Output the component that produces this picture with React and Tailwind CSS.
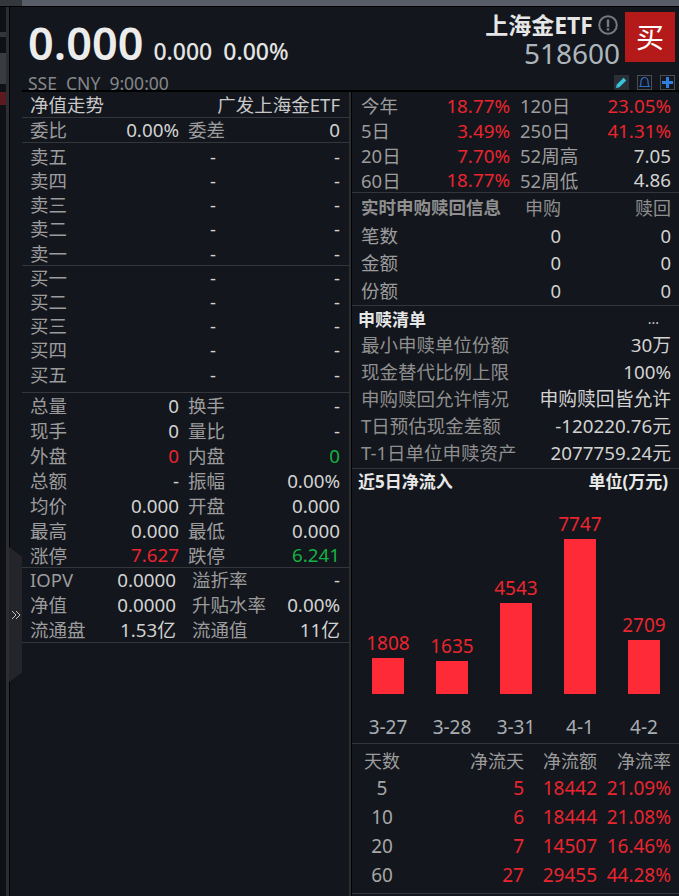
const font = { fontFamily: '"Noto Sans", "Noto Sans CJK SC", sans-serif' };

const RED = "text-[#e9252f]";
const GREEN = "text-[#14b143]";

// 一行两组: 左 label + value, 右 label + value
const Pair = ({ label, value, cls = "text-[#d2d2d2]", w = "w-[149px]" }) => (
    <div className={`flex justify-between items-center h-full ${w}`}>
        <span className="text-[#9c9c9c] whitespace-nowrap">{label}</span>
        <span className={`whitespace-nowrap text-[18.8px] ${cls}`}>{value}</span>
    </div>
);

const Row = ({ a, b, h = "h-[24.4px]", gap = "gap-[9px]", w = "w-[149px]" }) => (
    <div className={`flex ${gap} pl-2 pr-[9px] ${h}`}>
        <Pair {...a} w={w} />
        <div className="flex-1 h-full">
            <Pair {...b} w="w-full" />
        </div>
    </div>
);

const OrderRows = ({ names }) =>
    names.map((n) => (
        <div key={n} className="grid grid-cols-[186px_1fr] items-center pl-2 pr-[9px] h-[24.2px]">
            <span className="text-[#9c9c9c] flex justify-between">
                {n}
                <span className="text-[#d2d2d2]">-</span>
            </span>
            <span className="text-right text-[#d2d2d2]">-</span>
        </div>
    ));

const stats = [
    [{ label: "总量", value: "0" }, { label: "换手", value: "-" }],
    [{ label: "现手", value: "0" }, { label: "量比", value: "-" }],
    [{ label: "外盘", value: "0", cls: RED }, { label: "内盘", value: "0", cls: GREEN }],
    [{ label: "总额", value: "-" }, { label: "振幅", value: "0.00%" }],
    [{ label: "均价", value: "0.000" }, { label: "开盘", value: "0.000" }],
    [{ label: "最高", value: "0.000" }, { label: "最低", value: "0.000" }],
    [{ label: "涨停", value: "7.627", cls: RED }, { label: "跌停", value: "6.241", cls: GREEN }],
];

const etfStats = [
    [{ label: "IOPV", value: "0.0000" }, { label: "溢折率", value: "-" }],
    [{ label: "净值", value: "0.0000" }, { label: "升贴水率", value: "0.00%" }],
    [{ label: "流通盘", value: "1.53亿" }, { label: "流通值", value: "11亿" }],
];

const returns = [
    [{ label: "今年", value: "18.77%", cls: RED }, { label: "120日", value: "23.05%", cls: RED }],
    [{ label: "5日", value: "3.49%", cls: RED }, { label: "250日", value: "41.31%", cls: RED }],
    [{ label: "20日", value: "7.70%", cls: RED }, { label: "52周高", value: "7.05" }],
    [{ label: "60日", value: "18.77%", cls: RED }, { label: "52周低", value: "4.86" }],
];

const lists = [
    ["最小申赎单位份额", "30万"],
    ["现金替代比例上限", "100%"],
    ["申购赎回允许情况", "申购赎回皆允许"],
    ["T日预估现金差额", "-120220.76元"],
    ["T-1日单位申赎资产", "2077759.24元"],
];

const bars = [
    ["3-27", 1808],
    ["3-28", 1635],
    ["3-31", 4543],
    ["4-1", 7747],
    ["4-2", 2709],
];

const flows = [
    ["5", "5", "18442", "21.09%"],
    ["10", "6", "18444", "21.08%"],
    ["20", "7", "14507", "16.46%"],
    ["60", "27", "29455", "44.28%"],
];

const Header = () => (
    <div className="flex justify-between h-[83px] border-b-2 border-black box-content">
        <div className="pl-[6px]">
            <div className="flex items-baseline h-[63px] pt-[5px]">
                <span className="text-[45px] leading-[62px] font-semibold text-[#ececec]">0.000</span>
                <span className="ml-[10px] text-[23px] font-medium text-[#e4e4e4]">0.000</span>
                <span className="ml-[11px] text-[23px] font-medium text-[#e4e4e4]">0.00%</span>
            </div>
            <div className="text-[17.5px] leading-[16px] mt-[5px] text-[#85878a] whitespace-pre">SSE  CNY  9:00:00</div>
        </div>
        <div className="flex flex-col items-end pr-1">
            <div className="flex gap-[5px] pt-[5px]">
                <div className="flex flex-col items-end">
                    <div className="flex items-center gap-[5px] h-[26px] pr-[2px]">
                        <span className="text-[23px] font-bold text-[#e6e6e6] leading-none">上海金ETF</span>
                        <svg width="20" height="20" viewBox="0 0 20 20" fill="none">
                            <circle cx="10" cy="10" r="8.8" stroke="#77797c" strokeWidth="2" />
                            <rect x="8.8" y="4.5" width="2.4" height="7.5" fill="#77797c" />
                            <rect x="8.8" y="13.2" width="2.4" height="2.4" fill="#77797c" />
                        </svg>
                    </div>
                    <div className="text-[28px] leading-[31px] text-[#aeb6bd]">518600</div>
                </div>
                <div className="w-[50px] h-[50px] bg-[#b51a1a] flex items-center justify-center text-[28px] text-white leading-none">买</div>
            </div>
            <div className="flex gap-2 mt-[6px]">
                <div className="w-[15px] h-[15px] bg-[#2a3036] flex items-center justify-center">
                    <svg width="13" height="13" viewBox="0 0 13 13">
                        <path d="M1 12 L1.8 8.6 L8.6 1.8 L11.2 4.4 L4.4 11.2 Z" fill="#37c5dc" />
                    </svg>
                </div>
                <div className="w-[15px] h-[15px] border border-[#4a4d52] flex items-center justify-center">
                    <svg width="13" height="13" viewBox="0 0 13 13" fill="none">
                        <path d="M2 10.5 C3 9.5 3 7 3 5.5 C3 3.5 4.5 1.5 6.5 1.5 C8.5 1.5 10 3.5 10 5.5 C10 7 10 9.5 11 10.5 Z" stroke="#2f6fc9" strokeWidth="1.2" />
                    </svg>
                </div>
                <div className="w-[15px] h-[15px] border border-[#4a4d52] flex items-center justify-center">
                    <svg width="13" height="13" viewBox="0 0 13 13">
                        <path d="M5 1 H8 V5 H12 V8 H8 V12 H5 V8 H1 V5 H5 Z" fill="#2f7fe0" />
                    </svg>
                </div>
            </div>
        </div>
    </div>
);

const LeftPanel = () => (
    <div className="w-[327px]">
        <div className="flex justify-between items-center h-[26px] pt-[2px] pl-2 pr-[9px] border-b border-[#33363b] text-[#c8c8c8]">
            <span>净值走势</span>
            <span>广发上海金ETF</span>
        </div>
        <div className="h-[25px] border-b border-[#33363b]">
            <Row a={{ label: "委比", value: "0.00%" }} b={{ label: "委差", value: "0" }} />
        </div>
        <div className="h-[123px] pt-[2px] border-b border-[#33363b]">
            <OrderRows names={["卖五", "卖四", "卖三", "卖二", "卖一"]} />
        </div>
        <div className="h-[127px] border-b border-[#33363b]">
            <OrderRows names={["买一", "买二", "买三", "买四", "买五"]} />
        </div>
        <div className="h-[175px] pt-[1px] border-b border-[#33363b]">
            {stats.map(([a, b]) => (
                <Row key={a.label} a={a} b={b} h="h-[24.9px]" />
            ))}
        </div>
        <div className="h-[75px] border-b border-[#33363b]">
            {etfStats.map(([a, b]) => (
                <Row key={a.label} a={a} b={b} h="h-[24.8px]" gap="gap-[16px]" w="w-[146px]" />
            ))}
        </div>
    </div>
);

const RightPanel = () => (
    <div className="flex-1 min-w-0">
        <div className="h-[101px] pt-[2px] border-b border-[#33363b]">
            {returns.map(([a, b]) => (
                <div key={a.label} className="flex gap-[10px] pl-[9px] pr-2 h-[24.8px]">
                    <Pair {...a} />
                    <div className="flex-1 h-full">
                        <Pair {...b} w="w-full" />
                    </div>
                </div>
            ))}
        </div>
        <div className="h-[113px] pt-[1px] pl-[9px] pr-2 border-b border-[#33363b]">
            <div className="grid grid-cols-[1fr_54px_110px] items-center h-[28px] text-right text-[#8f8f8f] text-lg">
                <span className="text-left font-bold text-[17.5px]">实时申购赎回信息</span>
                <span>申购</span>
                <span>赎回</span>
            </div>
            {["笔数", "金额", "份额"].map((n) => (
                <div key={n} className="grid grid-cols-[1fr_54px_110px] items-center h-[27.7px] text-right text-[#d2d2d2]">
                    <span className="text-left text-[#9c9c9c]">{n}</span>
                    <span>0</span>
                    <span>0</span>
                </div>
            ))}
        </div>
        <div className="h-[163px] pl-[9px] pr-2 border-b border-[#33363b]">
            <div className="flex justify-between items-center h-[26px] -ml-[3px] font-bold text-[17px] text-[#e8e8e8]">
                <span>申赎清单</span>
                <span className="mr-[12px] text-[#c8c8c8] font-normal text-sm">...</span>
            </div>
            {lists.map(([k, v]) => (
                <div key={k} className="flex justify-between items-center h-[27px]">
                    <span className="text-[#8f8f8f]">{k}</span>
                    <span className="text-[#d2d2d2] text-[18.8px]">{v}</span>
                </div>
            ))}
        </div>
        <div className="flex justify-between items-center h-[25px] pl-[6px] pr-[11px] font-bold text-[17px] text-[#e8e8e8]">
            <span>近5日净流入</span>
            <span>单位(万元)</span>
        </div>
        <div className="flex items-end h-[200px] pl-1">
            {bars.map(([d, v]) => (
                <div key={d} className="w-16 flex flex-col items-center">
                    <span className={`${RED} text-[19px] leading-[24px] mb-[3px]`}>{v}</span>
                    <div className="w-8 bg-[#ff2a37]" style={{ height: v * 0.02 }} />
                </div>
            ))}
        </div>
        <div className="flex h-[50px] pt-[21px] pl-1 border-b border-[#33363b]">
            {bars.map(([d]) => (
                <div key={d} className="w-16 text-center text-[#a8adb2] text-[19px] leading-[24px]">{d}</div>
            ))}
        </div>
        <div className="h-[150px] pt-[3px] pl-3 border-b border-[#33363b]">
            <div className="grid grid-cols-[36px_124px_73px_74px] items-center h-[27px] text-right text-[#9c9c9c] text-lg">
                <span className="text-center">天数</span>
                <span>净流天</span>
                <span>净流额</span>
                <span>净流率</span>
            </div>
            {flows.map(([d, n, m, r]) => (
                <div key={d} className={`grid grid-cols-[36px_124px_73px_74px] items-center h-[29px] text-right text-[19px] ${RED}`}>
                    <span className="text-center text-[#a6a6a6]">{d}</span>
                    <span>{n}</span>
                    <span>{m}</span>
                    <span>{r}</span>
                </div>
            ))}
        </div>
    </div>
);

export default function App() {
    return (
        <div className="relative w-[679px] h-[896px] overflow-hidden bg-[#13161c] text-[18.5px] leading-none flex flex-col" style={font}>
            <div className="h-[6px] bg-[#575c66] shrink-0 border-l-[22px] border-[#34373c]" />
            <div className="h-px bg-black shrink-0" />
            <div className="flex flex-1 min-h-0">
                <div className="w-[6px] bg-[#0f1116] flex flex-col">
                    <div className="h-[5px] mt-[25px] bg-[#33353a]" />
                    <div className="h-[31px] mt-[16px] bg-[#3a3c41]" />
                    <div className="h-[13px] mt-[8px] bg-[#5a1a20]" />
                </div>
                <div className="w-[3px] bg-[#2d2e32]" />
                <div className="w-px bg-black" />
                <div className="w-3" />
                <div className="flex-1 min-w-0 flex flex-col">
                    <Header />
                    <div className="flex flex-1 min-h-0">
                        <LeftPanel />
                        <div className="w-[3px] bg-[#2d2e32] border-r border-black" />
                        <RightPanel />
                    </div>
                </div>
            </div>
            <div className="absolute left-[9px] top-[547px] w-[13px] h-[135px] bg-[#23252b] flex items-center justify-center [clip-path:polygon(0_0,100%_7%,100%_93%,0_100%)]">
                <svg width="10" height="10" viewBox="0 0 10 10" fill="none" stroke="#c4c4c4" strokeWidth="1">
                    <path d="M1 1 L5 5 L1 9 M5 1 L9 5 L5 9" />
                </svg>
            </div>
        </div>
    );
}
